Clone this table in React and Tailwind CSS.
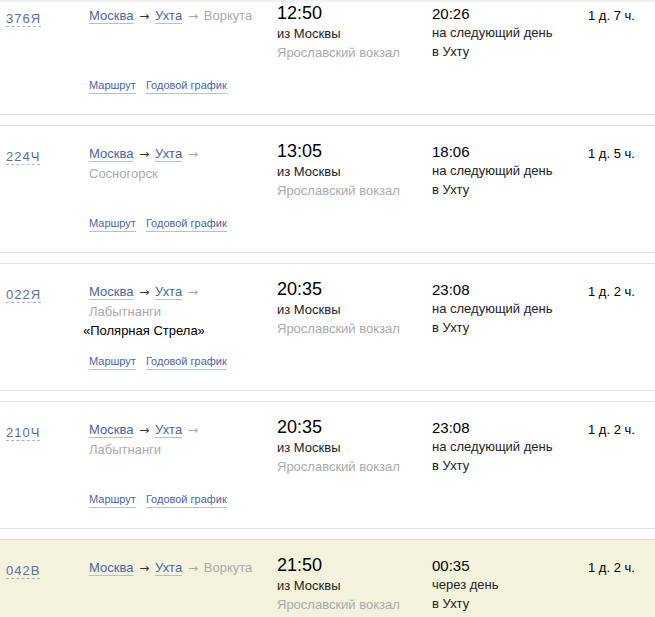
import React from 'react';

// Список поездов Москва → Ухта: номер, маршрут, отправление, прибытие, в пути.

const trains = [
    {
        num: '376Я',
        route: ['Москва', 'Ухта'],
        tail: 'Воркута',
        tailWrap: false,
        dep: '12:50',
        arr: '20:26',
        arrNote: 'на следующий день',
        dur: '1 д. 7 ч.',
    },
    {
        num: '224Ч',
        route: ['Москва', 'Ухта'],
        tail: 'Сосногорск',
        tailWrap: true,
        dep: '13:05',
        arr: '18:06',
        arrNote: 'на следующий день',
        dur: '1 д. 5 ч.',
    },
    {
        num: '022Я',
        route: ['Москва', 'Ухта'],
        tail: 'Лабытнанги',
        tailWrap: true,
        name: '«Полярная Стрела»',
        dep: '20:35',
        arr: '23:08',
        arrNote: 'на следующий день',
        dur: '1 д. 2 ч.',
    },
    {
        num: '210Ч',
        route: ['Москва', 'Ухта'],
        tail: 'Лабытнанги',
        tailWrap: true,
        dep: '20:35',
        arr: '23:08',
        arrNote: 'на следующий день',
        dur: '1 д. 2 ч.',
    },
    {
        num: '042В',
        route: ['Москва', 'Ухта'],
        tail: 'Воркута',
        tailWrap: false,
        dep: '21:50',
        arr: '00:35',
        arrNote: 'через день',
        dur: '1 д. 2 ч.',
        highlight: true,
    },
];

const link = 'text-[#4b66a0] border-b border-[#b3c0dd]';

// Стрелка шире в DejaVu Sans — ближе к оригиналу.
function Arrow({ gray }) {
    return (
        <span
            className={`mx-[2px] text-[12px] ${gray ? 'text-[#aaa]' : 'text-[#333]'}`}
            style={{ fontFamily: '"DejaVu Sans", sans-serif' }}
        >
            {' → '}
        </span>
    );
}

function TrainRow({ t }) {
    return (
        <div
            className={`flex h-[128px] border-y border-[#e2e2e2] ${t.highlight ? 'bg-[#f3f2dc]' : 'bg-white'}`}
        >
            <div className="w-[89px] shrink-0 pl-[6px] pt-[18px]">
                <span className="text-[13px] leading-[19px] tracking-[1px] text-[#5a6fa0] border-b border-dashed border-[#a5b4d4]">
                    {t.num}
                </span>
            </div>

            <div className="w-[188px] shrink-0 pt-[18px]">
                <div className="min-h-[72px] text-[13px] leading-[19px]">
                    <div className={t.tailWrap ? 'w-[124px]' : ''}>
                        <span className={link}>{t.route[0]}</span>
                        <Arrow />
                        <span className={link}>{t.route[1]}</span>
                        <Arrow gray />
                        <span className="text-[#aaa]">{t.tail}</span>
                    </div>
                    {t.name && <div className="-ml-[6px] text-black">{t.name}</div>}
                </div>
                <div className="text-[11px] leading-[15px] flex gap-[10px]">
                    <span className={link}>Маршрут</span>
                    <span className={link}>Годовой график</span>
                </div>
            </div>

            <div className="w-[155px] shrink-0 pt-[15px]">
                <div className="text-[18px] leading-[21px] text-black">{t.dep}</div>
                <div className="text-[13px] leading-[19px] text-[#222]">из Москвы</div>
                <div className="text-[13px] leading-[19px] text-[#aaa]">Ярославский вокзал</div>
            </div>

            <div className="w-[156px] shrink-0 pt-[16px]">
                <div className="text-[15px] leading-[20px] text-black">{t.arr}</div>
                <div className="text-[13px] leading-[18px] text-[#222]">{t.arrNote}</div>
                <div className="text-[13px] leading-[19px] text-[#222]">в Ухту</div>
            </div>

            <div className="flex-1 pt-[18px] text-[13px] leading-[19px] text-black">{t.dur}</div>
        </div>
    );
}

export default function App() {
    return (
        <div
            className="relative h-[617px] w-[655px] overflow-hidden bg-white"
            style={{ fontFamily: '"Liberation Sans", Arial, sans-serif' }}
        >
            <div className="-mt-[13px] flex flex-col gap-[10px]">
                {trains.map((t) => (
                    <TrainRow key={t.num} t={t} />
                ))}
            </div>
            <div className="pointer-events-none absolute inset-x-0 top-0 h-[4px] bg-gradient-to-b from-[#ececec] to-transparent" />
        </div>
    );
}
